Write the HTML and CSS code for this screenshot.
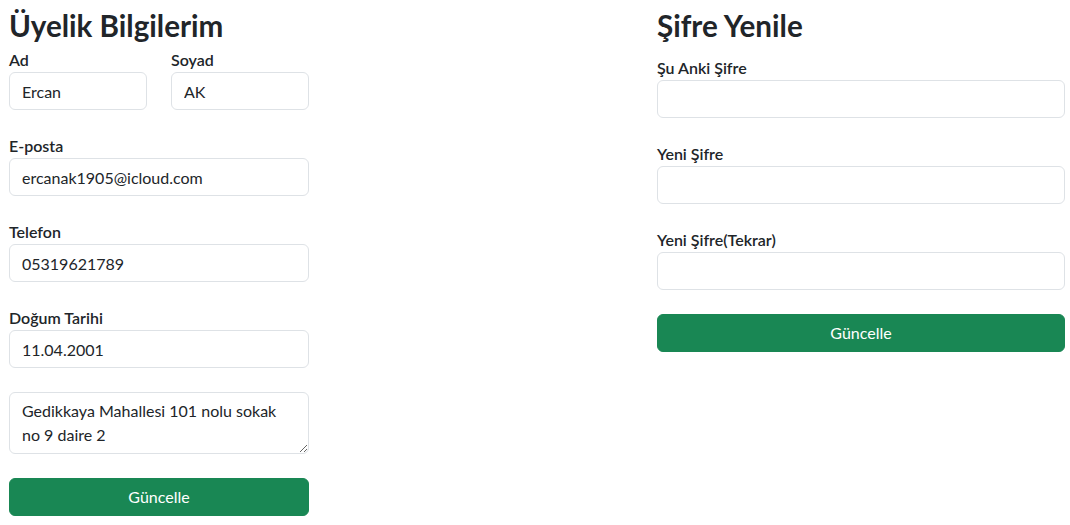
FILE: index.html
```html
<!DOCTYPE html>
<html lang="tr">
<head>
<meta charset="utf-8">
<title>Üyelik Bilgilerim</title>
<link rel="stylesheet" href="styles.css">
</head>
<body>
<div class="page">
  <section class="col col-left">
    <h2 class="title">Üyelik Bilgilerim</h2>
    <div class="pair">
      <div class="field">
        <label class="label">Ad</label>
        <input class="input" type="text" value="Ercan">
      </div>
      <div class="field">
        <label class="label">Soyad</label>
        <input class="input" type="text" value="AK">
      </div>
    </div>
    <div class="field">
      <label class="label">E-posta</label>
      <input class="input" type="text" value="ercanak1905@icloud.com">
    </div>
    <div class="field">
      <label class="label">Telefon</label>
      <input class="input" type="text" value="05319621789">
    </div>
    <div class="field">
      <label class="label">Doğum Tarihi</label>
      <input class="input" type="text" value="11.04.2001">
    </div>
    <div class="field">
      <textarea class="input textarea" rows="2">Gedikkaya Mahallesi 101 nolu sokak no 9 daire 2</textarea>
    </div>
    <button class="btn" type="button">Güncelle</button>
  </section>
  <section class="col col-right">
    <h2 class="title title-right">Şifre Yenile</h2>
    <div class="field">
      <label class="label">Şu Anki Şifre</label>
      <input class="input" type="password">
    </div>
    <div class="field">
      <label class="label">Yeni Şifre</label>
      <input class="input" type="password">
    </div>
    <div class="field">
      <label class="label">Yeni Şifre(Tekrar)</label>
      <input class="input" type="password">
    </div>
    <button class="btn" type="button">Güncelle</button>
  </section>
</div>
</body>
</html>
```

FILE: styles.css
```css
* { box-sizing: border-box; }
html, body {
  margin: 0;
  background: #fff;
  color: #212529;
  font-family: Lato, "Noto Sans", sans-serif;
  font-size: 16px;
  line-height: 1.5;
}
.page {
  display: grid;
  grid-template-columns: 300px 408px;
  column-gap: 348px;
  padding-left: 9px;
  align-items: start;
}
.col { display: flex; flex-direction: column; }
.title {
  margin: 7px 0 4px;
  font-size: 29.6px;
  line-height: 37px;
  font-weight: 700;
}
.title-right { margin-bottom: 12px; }
.pair {
  display: grid;
  grid-template-columns: 1fr 1fr;
  column-gap: 24px;
}
.field { display: flex; flex-direction: column; margin-bottom: 24px; }
.label {
  font-weight: 600;
  line-height: 24px;
  height: 24px;
}
.input {
  display: block;
  width: 100%;
  height: 38px;
  padding: 6px 12px;
  font: inherit;
  font-size: 16px;
  line-height: 24px;
  color: #212529;
  background: #fff;
  border: 1px solid #dee2e6;
  border-radius: 6px;
  outline: none;
}
.textarea {
  height: 62px;
  resize: vertical;
  overflow: hidden;
}
.btn {
  display: block;
  width: 100%;
  height: 38px;
  padding: 6px 12px;
  font: inherit;
  font-size: 16px;
  line-height: 24px;
  color: #fff;
  background: #198754;
  border: 1px solid #198754;
  border-radius: 6px;
  text-align: center;
}
```
